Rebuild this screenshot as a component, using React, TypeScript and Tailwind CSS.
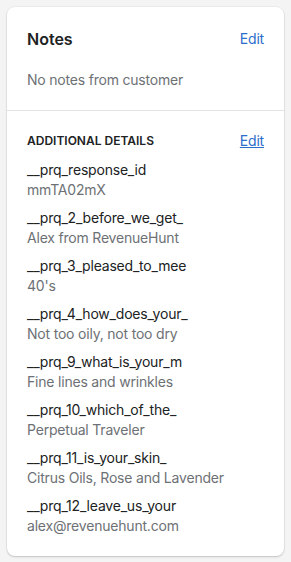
const details = [
  { key: '__prq_response_id', value: 'mmTA02mX' },
  { key: '__prq_2_before_we_get_', value: 'Alex from RevenueHunt' },
  { key: '__prq_3_pleased_to_mee', value: "40's" },
  { key: '__prq_4_how_does_your_', value: 'Not too oily, not too dry' },
  { key: '__prq_9_what_is_your_m', value: 'Fine lines and wrinkles' },
  { key: '__prq_10_which_of_the_', value: 'Perpetual Traveler' },
  { key: '__prq_11_is_your_skin_', value: 'Citrus Oils, Rose and Lavender' },
  { key: '__prq_12_leave_us_your', value: 'alex@revenuehunt.com' },
];

export default function App() {
  return (
    <div
      className="min-h-[562px] w-[291px] bg-[#f4f4f4] px-[7px] pt-[7px] pb-[7px]"
      style={{ fontFamily: 'Inter, "Noto Sans", sans-serif' }}
    >
      <div className="rounded-lg bg-white shadow-[0_1px_2px_rgba(0,0,0,0.18),0_0_0_1px_rgba(0,0,0,0.03)]">
        {/* Notes */}
        <div className="px-5 pt-5 pb-5 border-b border-[#e1e3e5]">
          <div className="flex items-center justify-between h-6">
            <h2 className="text-[16px] leading-6 font-semibold text-[#202223]">Notes</h2>
            <button className="text-[14px] leading-5 tracking-[-0.2px] text-[#2c6ecb]">Edit</button>
          </div>
          <p className="mt-[19px] text-[14px] leading-5 tracking-[-0.2px] text-[#6d7175]">
            No notes from customer
          </p>
        </div>

        {/* Additional details */}
        <div className="px-5 pt-5 pb-5">
          <div className="flex items-center justify-between h-5">
            <h3 className="text-[12px] leading-4 font-semibold uppercase text-[#202223]">
              Additional details
            </h3>
            <button className="text-[14px] leading-5 tracking-[-0.2px] text-[#2c6ecb] underline">Edit</button>
          </div>
          <div className="mt-[9px] flex flex-col gap-2">
            {details.map(d => (
              <div key={d.key} className="text-[14px] leading-5 tracking-[-0.2px]">
                <div className="text-[#202223]">{d.key}</div>
                <div className="text-[#6d7175]">{d.value}</div>
              </div>
            ))}
          </div>
        </div>
      </div>
    </div>
  );
}
